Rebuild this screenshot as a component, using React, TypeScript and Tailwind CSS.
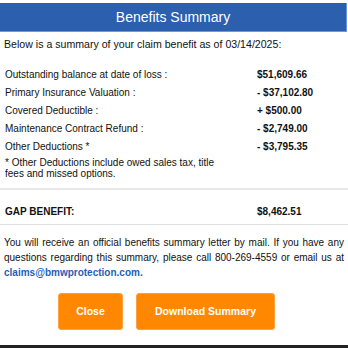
import React from "react";

const rows: [string, string][] = [
  ["Outstanding balance at date of loss :", "$51,609.66"],
  ["Primary Insurance Valuation :", "- $37,102.80"],
  ["Covered Deductible :", "+ $500.00"],
  ["Maintenance Contract Refund :", "- $2,749.00"],
  ["Other Deductions *", "- $3,795.35"],
];

export default function App() {
  return (
    <div
      className="w-[348px] h-[348px] bg-white flex flex-col overflow-hidden text-[#111]"
      style={{ fontFamily: '"Liberation Sans", Arial, sans-serif' }}
    >
      <div className="mt-[3px] h-[29px] w-[347px] bg-[#2c5fae] border-b border-r border-[#6a98dc] flex items-center justify-center text-white text-[14px]">
        Benefits Summary
      </div>
      <div className="px-[4px] pt-[6px] text-[10.6px] leading-[13px]">
        Below is a summary of your claim benefit as of 03/14/2025:
      </div>
      <div className="flex flex-col pt-[14px]">
        {rows.map(([l, v]) => (
          <div key={l} className="flex h-[18px] items-center text-[10px]">
            <div className="pl-[5px] w-[257px]">{l}</div>
            <div className="font-bold">{v}</div>
          </div>
        ))}
        <div className="pl-[5px] pt-[2px] text-[10px] leading-[11px] w-[222px]">
          * Other Deductions include owed sales tax, title fees and missed options.
        </div>
      </div>
      <div className="mt-[9px] h-[2px] bg-[#e8e8e8]" />
      <div className="flex pt-[15px] pb-[6px] leading-[13px] text-[10px] font-bold">
        <div className="pl-[5px] w-[257px]">GAP BENEFIT:</div>
        <div>$8,462.51</div>
      </div>
      <div className="h-px bg-[#dedede]" />
      <p className="px-[4px] pt-[10px] text-[10px] leading-[15px] text-justify">
        You will receive an official benefits summary letter by mail. If you have any
        questions regarding this summary, please call 800-269-4559 or email us at{" "}
        <span className="text-[#1d5fb5] font-bold">claims@bmwprotection.com.</span>
      </p>
      <div className="flex justify-center gap-[13px] pr-[15px] pt-[13px]">
        <button className="w-[65px] h-[37px] rounded-[3px] bg-[#ff8800] border border-[#ffa040] text-white text-[10.5px] font-bold">
          Close
        </button>
        <button className="w-[139px] h-[37px] rounded-[3px] bg-[#ff8800] border border-[#ffa040] text-white text-[10.5px] font-bold">
          Download Summary
        </button>
      </div>
      <div className="mt-auto h-[3px] bg-[#222]" />
    </div>
  );
}
